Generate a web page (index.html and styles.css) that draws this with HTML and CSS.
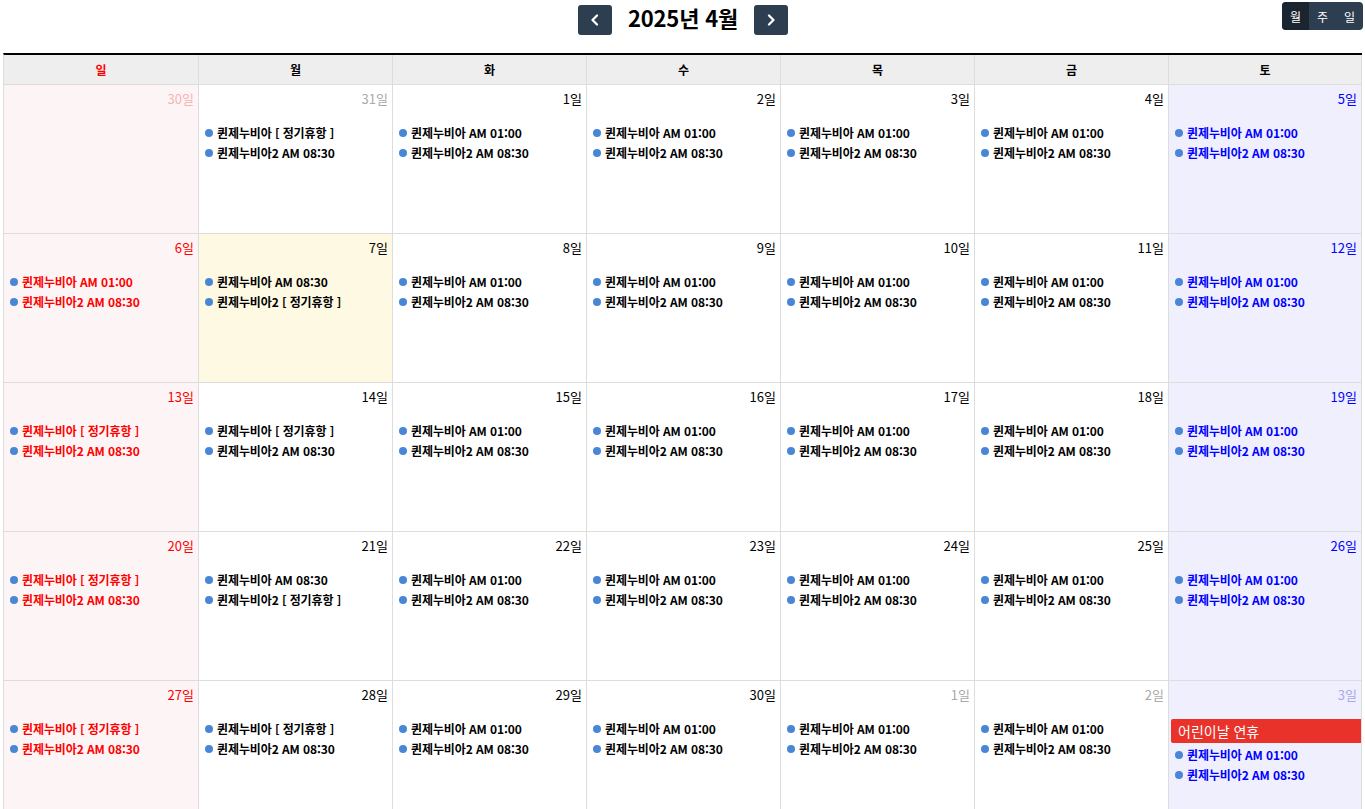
FILE: index.html
```html
<!DOCTYPE html>
<html lang="ko">
<head>
<meta charset="utf-8">
<title>2025년 4월</title>
<link rel="stylesheet" href="styles.css">
</head>
<body>
<div class="page">
  <div class="toolbar">
    <div class="spacer"></div>
    <div class="nav">
      <button class="nav-btn" aria-label="이전"><svg width="10" height="12" viewBox="0 0 10 12"><path d="M7 1.5 L2.5 6 L7 10.5" fill="none" stroke="#fff" stroke-width="2.2" stroke-linecap="round" stroke-linejoin="round"/></svg></button>
      <h1 class="title">2025년 4월</h1>
      <button class="nav-btn" aria-label="다음"><svg width="10" height="12" viewBox="0 0 10 12"><path d="M3 1.5 L7.5 6 L3 10.5" fill="none" stroke="#fff" stroke-width="2.2" stroke-linecap="round" stroke-linejoin="round"/></svg></button>
    </div>
    <div class="views">
      <span class="view active">월</span><span class="view">주</span><span class="view">일</span>
    </div>
  </div>

  <div class="calendar">
    <div class="head sun">일</div>
    <div class="head">월</div>
    <div class="head">화</div>
    <div class="head">수</div>
    <div class="head">목</div>
    <div class="head">금</div>
    <div class="head">토</div>

    <!-- week 1 -->
    <div class="cell sun other"><div class="num">30일</div></div>
    <div class="cell other"><div class="num">31일</div><ul class="events"><li>퀸제누비아 [ 정기휴항 ]</li><li>퀸제누비아2 AM 08:30</li></ul></div>
    <div class="cell"><div class="num">1일</div><ul class="events"><li>퀸제누비아 AM 01:00</li><li>퀸제누비아2 AM 08:30</li></ul></div>
    <div class="cell"><div class="num">2일</div><ul class="events"><li>퀸제누비아 AM 01:00</li><li>퀸제누비아2 AM 08:30</li></ul></div>
    <div class="cell"><div class="num">3일</div><ul class="events"><li>퀸제누비아 AM 01:00</li><li>퀸제누비아2 AM 08:30</li></ul></div>
    <div class="cell"><div class="num">4일</div><ul class="events"><li>퀸제누비아 AM 01:00</li><li>퀸제누비아2 AM 08:30</li></ul></div>
    <div class="cell sat"><div class="num">5일</div><ul class="events"><li>퀸제누비아 AM 01:00</li><li>퀸제누비아2 AM 08:30</li></ul></div>

    <!-- week 2 -->
    <div class="cell sun"><div class="num">6일</div><ul class="events"><li>퀸제누비아 AM 01:00</li><li>퀸제누비아2 AM 08:30</li></ul></div>
    <div class="cell today"><div class="num">7일</div><ul class="events"><li>퀸제누비아 AM 08:30</li><li>퀸제누비아2 [ 정기휴항 ]</li></ul></div>
    <div class="cell"><div class="num">8일</div><ul class="events"><li>퀸제누비아 AM 01:00</li><li>퀸제누비아2 AM 08:30</li></ul></div>
    <div class="cell"><div class="num">9일</div><ul class="events"><li>퀸제누비아 AM 01:00</li><li>퀸제누비아2 AM 08:30</li></ul></div>
    <div class="cell"><div class="num">10일</div><ul class="events"><li>퀸제누비아 AM 01:00</li><li>퀸제누비아2 AM 08:30</li></ul></div>
    <div class="cell"><div class="num">11일</div><ul class="events"><li>퀸제누비아 AM 01:00</li><li>퀸제누비아2 AM 08:30</li></ul></div>
    <div class="cell sat"><div class="num">12일</div><ul class="events"><li>퀸제누비아 AM 01:00</li><li>퀸제누비아2 AM 08:30</li></ul></div>

    <!-- week 3 -->
    <div class="cell sun"><div class="num">13일</div><ul class="events"><li>퀸제누비아 [ 정기휴항 ]</li><li>퀸제누비아2 AM 08:30</li></ul></div>
    <div class="cell"><div class="num">14일</div><ul class="events"><li>퀸제누비아 [ 정기휴항 ]</li><li>퀸제누비아2 AM 08:30</li></ul></div>
    <div class="cell"><div class="num">15일</div><ul class="events"><li>퀸제누비아 AM 01:00</li><li>퀸제누비아2 AM 08:30</li></ul></div>
    <div class="cell"><div class="num">16일</div><ul class="events"><li>퀸제누비아 AM 01:00</li><li>퀸제누비아2 AM 08:30</li></ul></div>
    <div class="cell"><div class="num">17일</div><ul class="events"><li>퀸제누비아 AM 01:00</li><li>퀸제누비아2 AM 08:30</li></ul></div>
    <div class="cell"><div class="num">18일</div><ul class="events"><li>퀸제누비아 AM 01:00</li><li>퀸제누비아2 AM 08:30</li></ul></div>
    <div class="cell sat"><div class="num">19일</div><ul class="events"><li>퀸제누비아 AM 01:00</li><li>퀸제누비아2 AM 08:30</li></ul></div>

    <!-- week 4 -->
    <div class="cell sun"><div class="num">20일</div><ul class="events"><li>퀸제누비아 [ 정기휴항 ]</li><li>퀸제누비아2 AM 08:30</li></ul></div>
    <div class="cell"><div class="num">21일</div><ul class="events"><li>퀸제누비아 AM 08:30</li><li>퀸제누비아2 [ 정기휴항 ]</li></ul></div>
    <div class="cell"><div class="num">22일</div><ul class="events"><li>퀸제누비아 AM 01:00</li><li>퀸제누비아2 AM 08:30</li></ul></div>
    <div class="cell"><div class="num">23일</div><ul class="events"><li>퀸제누비아 AM 01:00</li><li>퀸제누비아2 AM 08:30</li></ul></div>
    <div class="cell"><div class="num">24일</div><ul class="events"><li>퀸제누비아 AM 01:00</li><li>퀸제누비아2 AM 08:30</li></ul></div>
    <div class="cell"><div class="num">25일</div><ul class="events"><li>퀸제누비아 AM 01:00</li><li>퀸제누비아2 AM 08:30</li></ul></div>
    <div class="cell sat"><div class="num">26일</div><ul class="events"><li>퀸제누비아 AM 01:00</li><li>퀸제누비아2 AM 08:30</li></ul></div>

    <!-- week 5 -->
    <div class="cell sun"><div class="num">27일</div><ul class="events"><li>퀸제누비아 [ 정기휴항 ]</li><li>퀸제누비아2 AM 08:30</li></ul></div>
    <div class="cell"><div class="num">28일</div><ul class="events"><li>퀸제누비아 [ 정기휴항 ]</li><li>퀸제누비아2 AM 08:30</li></ul></div>
    <div class="cell"><div class="num">29일</div><ul class="events"><li>퀸제누비아 AM 01:00</li><li>퀸제누비아2 AM 08:30</li></ul></div>
    <div class="cell"><div class="num">30일</div><ul class="events"><li>퀸제누비아 AM 01:00</li><li>퀸제누비아2 AM 08:30</li></ul></div>
    <div class="cell other"><div class="num">1일</div><ul class="events"><li>퀸제누비아 AM 01:00</li><li>퀸제누비아2 AM 08:30</li></ul></div>
    <div class="cell other"><div class="num">2일</div><ul class="events"><li>퀸제누비아 AM 01:00</li><li>퀸제누비아2 AM 08:30</li></ul></div>
    <div class="cell sat other"><div class="num">3일</div><div class="holiday">어린이날 연휴</div><ul class="events tight"><li>퀸제누비아 AM 01:00</li><li>퀸제누비아2 AM 08:30</li></ul></div>
  </div>
</div>
</body>
</html>
```

FILE: styles.css
```css
* { box-sizing: border-box; }

html, body {
  margin: 0;
  padding: 0;
  background: #fff;
  font-family: "Noto Sans CJK KR", "Noto Sans", "Liberation Sans", sans-serif;
  color: #000;
}

.page {
  padding: 0 3px;
}

.toolbar {
  display: grid;
  grid-template-columns: 1fr auto 1fr;
  height: 53px;
}

.nav {
  display: flex;
  align-items: center;
  gap: 16px;
  height: 40px;
  padding-left: 1px;
}

.nav-btn {
  width: 34px;
  height: 30px;
  margin: 0;
  padding: 0;
  border: none;
  border-radius: 3px;
  background: #2c3e50;
  display: flex;
  align-items: center;
  justify-content: center;
}

.title {
  margin: 0;
  font-size: 22px;
  font-weight: 700;
  line-height: 30px;
  letter-spacing: -0.2px;
  position: relative;
  top: -3px;
}

.views {
  justify-self: end;
  display: flex;
  margin-top: 2px;
  margin-right: -1px;
  height: 28px;
  border-radius: 4px;
  overflow: hidden;
  background: #2c3e50;
}

.view {
  width: 27px;
  display: flex;
  align-items: center;
  justify-content: center;
  color: #fff;
  font-size: 12px;
}

.view.active {
  background: #1a252f;
}

.calendar {
  display: grid;
  grid-template-columns: 195px repeat(5, 194px) 1fr;
  grid-template-rows: 30px;
  grid-auto-rows: 149px;
  border-top: 2px solid #000;
  border-left: 1px solid #ddd;
}

.head {
  background: #eee;
  border-right: 1px solid #ddd;
  border-bottom: 1px solid #ddd;
  display: flex;
  align-items: center;
  justify-content: center;
  font-size: 12px;
  font-weight: 700;
  padding-bottom: 1px;
}

.head.sun { color: #f00; }

.cell {
  border-right: 1px solid #ddd;
  border-bottom: 1px solid #ddd;
  padding: 4px 0 0 0;
  background: #fff;
}

.cell.sun { background: #fdf5f5; }
.cell.sat { background: #efeffd; }
.cell.today { background: #fef9e3; }

.num {
  text-align: right;
  padding-right: 4px;
  font-size: 13px;
  line-height: 20px;
  height: 20px;
}

.cell.sun .num { color: #f00; }
.cell.sat .num { color: #00f; }
.cell.other .num { color: #aaa; }
.cell.sun.other .num { color: #f5b3b3; }
.cell.sat.other .num { color: #a9a9ee; }

.events {
  list-style: none;
  margin: 14px 0 0 0;
  padding: 0 0 0 5px;
}

.events.tight {
  margin-top: 2px;
}

.events li {
  position: relative;
  padding-left: 13px;
  height: 20px;
  line-height: 20px;
  font-size: 12px;
  font-weight: 700;
  white-space: nowrap;
  letter-spacing: -0.1px;
}

.events li::before {
  content: "";
  position: absolute;
  left: 1px;
  top: 6px;
  width: 8px;
  height: 8px;
  border-radius: 50%;
  background: #4a86d6;
}

.cell.sun .events li { color: #f00; }
.cell.sat .events li { color: #00f; }

.holiday {
  margin: 14px 0 0 2px;
  height: 24px;
  line-height: 24px;
  padding-left: 7px;
  background: #e8322a;
  color: #fff;
  font-size: 14px;
  border-radius: 2px 0 0 2px;
}
```
